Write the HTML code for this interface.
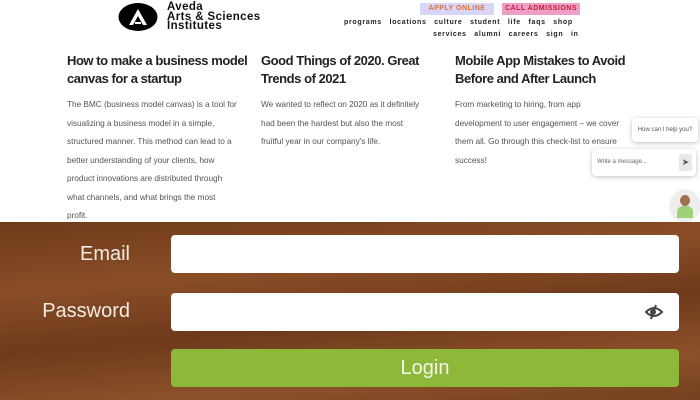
<!DOCTYPE html>
<html><head><style>
*{margin:0;padding:0;box-sizing:border-box}
body{width:700px;height:400px;overflow:hidden;background:#fff;font-family:"Liberation Sans",sans-serif;position:relative}
.a{position:absolute}
.brand{left:167px;top:3px;font-weight:bold;font-size:11.5px;line-height:9.7px;color:#111;letter-spacing:0.4px}
.btn{top:3px;height:12px;font-size:7px;font-weight:bold;text-align:center;line-height:12px;letter-spacing:.5px}
.nav{font-size:7px;font-weight:bold;color:#222;letter-spacing:.7px;word-spacing:5px;white-space:nowrap}
h3{position:absolute;font-size:13px;line-height:18px;color:#222;font-weight:bold;white-space:nowrap;letter-spacing:-0.45px}
p.b{position:absolute;font-size:8.3px;line-height:18.5px;color:#555;white-space:nowrap;letter-spacing:-0.05px}
.wood{left:0;top:222px;width:700px;height:178px;background:linear-gradient(175deg,#6e3a1a,#8a4e27 30%,#6e3a1b 55%,#8c5129 80%,#74401f);}
.lbl{color:#f3ece4;font-size:20px;text-align:right;width:130px;left:0}
.inp{left:171px;width:508px;height:38px;background:#fff;border-radius:4px}
</style></head><body>
<svg class="a" style="left:118px;top:2px" width="40" height="30" viewBox="0 0 40 30"><ellipse cx="20" cy="15" rx="19.5" ry="14" fill="#000"/><path d="M11 23 L20 7 L29 23 L25 23 L20 14 L15 23Z" fill="#fff"/><path d="M17 21 h6" stroke="#fff" stroke-width="2"/></svg>
<div class="a brand">Aveda<br>Arts &amp; Sciences<br>Institutes</div>
<div class="a btn" style="left:420px;width:74px;background:#d8d6f8;color:#e07030">APPLY ONLINE</div>
<div class="a btn" style="left:502px;width:78px;background:#ef9fc6;color:#c0203a">CALL ADMISSIONS</div>
<div class="a nav" style="left:344px;top:19px">programs locations culture student&nbsp;life faqs shop</div>
<div class="a nav" style="left:433px;top:31px">services alumni careers sign&nbsp;in</div>
<h3 style="left:67px;top:52px">How to make a business model<br>canvas for a startup</h3>
<p class="b" style="left:67px;top:95px">The BMC (business model canvas) is a tool for<br>visualizing a business model in a simple,<br>structured manner. This method can lead to a<br>better understanding of your clients, how<br>product innovations are distributed through<br>what channels, and what brings the most<br>profit.</p>
<h3 style="left:261px;top:52px">Good Things of 2020. Great<br>Trends of 2021</h3>
<p class="b" style="left:261px;top:95px">We wanted to reflect on 2020 as it definitely<br>had been the hardest but also the most<br>fruitful year in our company's life.</p>
<h3 style="left:455px;top:52px">Mobile App Mistakes to Avoid<br>Before and After Launch</h3>
<p class="b" style="left:455px;top:95px">From marketing to hiring, from app<br>development to user engagement – we cover<br>them all. Go through this check-list to ensure<br>success!</p>
<div class="a" style="left:632px;top:118px;width:66px;height:24px;background:#fff;border-radius:4px;box-shadow:0 1px 5px rgba(0,0,0,.25);font-size:6px;color:#555;line-height:24px;text-align:center">How can I help you?</div>
<div class="a" style="left:592px;top:149px;width:104px;height:27px;background:#fff;border-radius:4px;box-shadow:0 1px 5px rgba(0,0,0,.25);font-size:6px;color:#666;line-height:27px;padding-left:5px">Write a message...<div class="a" style="left:87px;top:5px;width:13px;height:17px;background:#e8e8e8;border-radius:2px;color:#555;font-size:9px;line-height:17px;text-align:center">➤</div></div>
<div class="a" style="left:671px;top:191px;width:28px;height:30px;border-radius:50%;background:#eee;box-shadow:0 0 3px rgba(0,0,0,.2);overflow:hidden"><div class="a" style="left:9px;top:4px;width:10px;height:11px;border-radius:50%;background:#a07050"></div><div class="a" style="left:6px;top:15px;width:16px;height:12px;border-radius:6px 6px 0 0;background:#9fd07a"></div></div>
<div class="a wood"></div>
<div class="a lbl" style="top:243px">Email</div>
<div class="a inp" style="top:235px"></div>
<div class="a lbl" style="top:300px">Password</div>
<div class="a inp" style="top:293px"><svg class="a" style="left:473px;top:11px" width="20" height="16" viewBox="0 0 20 16"><path d="M2 8 Q10 0 18 8 Q10 16 2 8Z" fill="none" stroke="#444" stroke-width="2"/><circle cx="9" cy="8" r="3" fill="#444"/><path d="M7 15 L12 1" stroke="#444" stroke-width="2"/></svg></div>
<div class="a" style="left:171px;top:349px;width:508px;height:38px;background:#8db83a;border-radius:4px;color:#f4f8ea;font-size:20px;text-align:center;line-height:38px">Login</div>
</body></html>
